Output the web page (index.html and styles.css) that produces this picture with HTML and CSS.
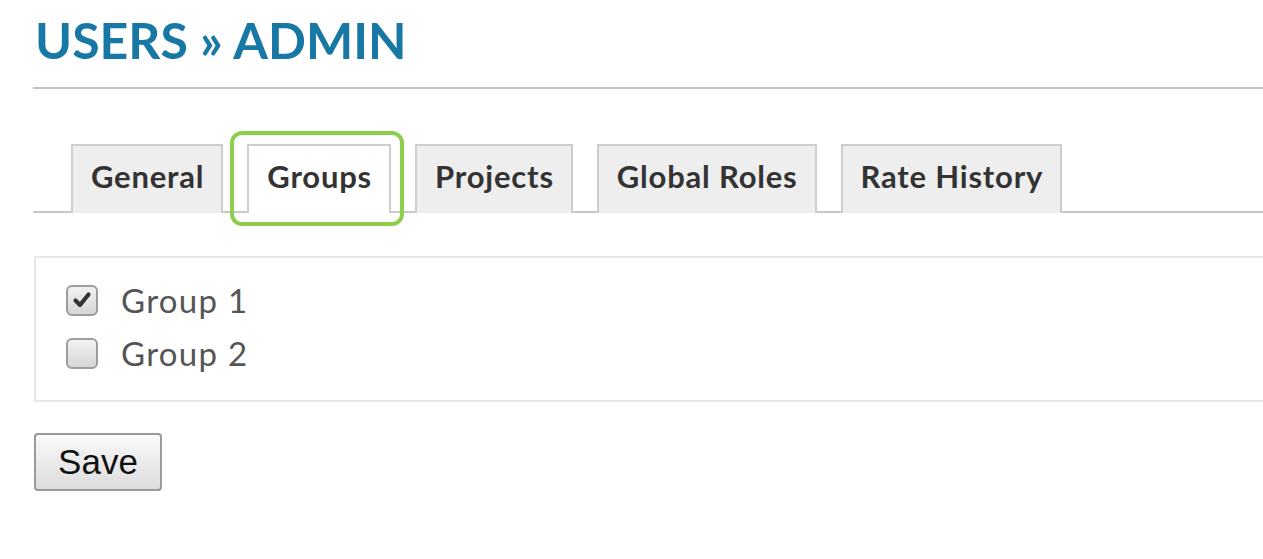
FILE: index.html
```html
<!DOCTYPE html>
<html>
<head>
<meta charset="utf-8">
<link rel="stylesheet" href="styles.css">
</head>
<body>
<div class="page">
  <h1 class="title">USERS » ADMIN</h1>
  <div class="tabs">
    <div class="tab">General</div>
    <div class="tab active">Groups</div>
    <div class="tab">Projects</div>
    <div class="tab">Global Roles</div>
    <div class="tab">Rate History</div>
  </div>
  <div class="box">
    <label class="row">
      <span class="cb checked"><svg viewBox="0 0 20 20" width="20" height="20"><path d="M3.5 10.5 L8 15 L16.5 4.5" fill="none" stroke="#333" stroke-width="4.2" stroke-linecap="round" stroke-linejoin="round"/></svg></span>
      <span class="lbl">Group 1</span>
    </label>
    <label class="row">
      <span class="cb"></span>
      <span class="lbl">Group 2</span>
    </label>
  </div>
  <button class="save">Save</button>
</div>
</body>
</html>
```
FILE: styles.css
```css
html, body {
  margin: 0;
  padding: 0;
  background: #fff;
  overflow: hidden;
}
.page {
  width: 1320px;
  padding-left: 33px;
  font-family: Lato, "Open Sans", sans-serif;
}
.title {
  margin: 0;
  margin-top: 8px;
  padding-top: 2px;
  padding-left: 2px;
  font-size: 50px;
  line-height: 1.2;
  font-weight: 700;
  color: #1878a5;
  border-bottom: 2px solid #c2c2c2;
  box-sizing: border-box;
  height: 81px;
}
.tabs {
  margin-top: 55px;
  display: flex;
  gap: 24px;
  padding-left: 38px;
  border-bottom: 2px solid #c8c8c8;
  height: 67px;
}
.tab {
  position: relative;
  height: 69px;
  box-sizing: border-box;
  padding: 0 17px 8px 18px;
  border: 2px solid #cdcdcd;
  border-bottom: none;
  background: #eeeeee;
  font-size: 31px;
  font-weight: 700;
  color: #333;
  display: flex;
  align-items: center;
  letter-spacing: 0.8px;
}
.tab.active {
  background: #fff;
  z-index: 1;
}
.tab.active::after {
  content: "";
  position: absolute;
  left: -19px;
  right: -15px;
  top: -15px;
  bottom: -13px;
  border: 4px solid #8dcf4c;
  border-radius: 12px;
}
.box {
  margin-top: 43px;
  margin-left: 1px;
  border: 2px solid #e6e6e6;
  height: 146px;
  box-sizing: border-box;
  padding-top: 26px;
  padding-left: 30px;
  display: flex;
  flex-direction: column;
  gap: 21px;
}
.row {
  display: flex;
  align-items: center;
  gap: 23px;
  height: 32px;
}
.cb {
  width: 32px;
  height: 31px;
  box-sizing: border-box;
  border: 2px solid #9d9d9d;
  border-radius: 6px;
  background: linear-gradient(#f2f2f2, #d6d6d6);
  display: flex;
  align-items: center;
  justify-content: center;
}
.lbl {
  font-size: 33px;
  color: #555;
  font-weight: 400;
  letter-spacing: 1.3px;
}
.save {
  margin-top: 31px;
  margin-left: 1px;
  width: 128px;
  height: 58px;
  border: 2px solid #9a9a9a;
  border-radius: 4px;
  background: linear-gradient(#fafafa, #dcdcdc);
  font-family: "Liberation Sans", Arial, sans-serif;
  font-size: 35px;
  color: #111;
  padding: 0;
}
```
